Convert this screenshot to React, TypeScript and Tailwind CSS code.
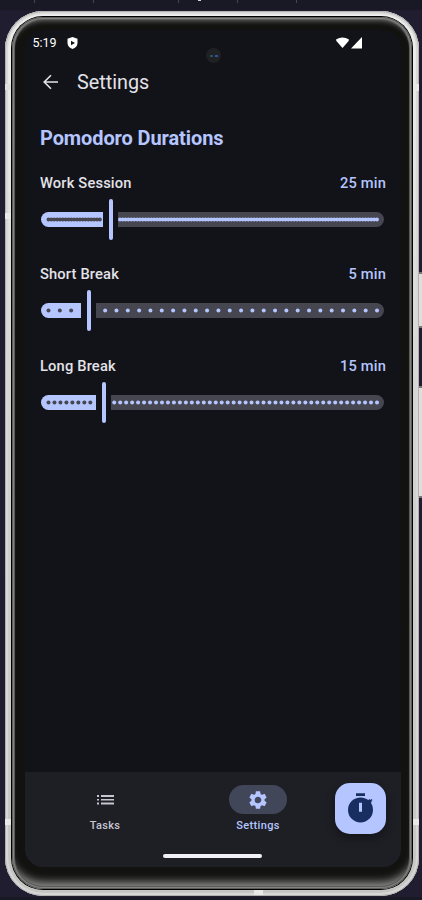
import React from "react";

const TICK_START = 7.5;
const TICK_SPAN = 328.5;

type DurationProps = {
  label: string;
  value: string;
  steps: number;
  active: number;
};

function Ticks({ from, width, steps, color }: { from: number; width: number; steps: number; color: string }) {
  const dots: number[] = [];
  for (let i = 0; i <= steps; i++) {
    const x = TICK_START + (TICK_SPAN * i) / steps - from;
    if (x >= 1.5 && x <= width - 0.5) dots.push(x);
  }
  const dense = steps > 100;
  return (
    <svg className="block h-full w-full" viewBox={`0 0 ${width} 15`} preserveAspectRatio="none">
      {dense && <path d={`M${dots[0]} 7.5H${dots[dots.length - 1]}`} stroke={color} strokeWidth={2.6} />}
      {dots.map((x) => (
        <circle key={x} cx={x} cy={7.5} r={dense ? 1.9 : 2} fill={color} />
      ))}
    </svg>
  );
}

function Duration({ label, value, steps, active }: DurationProps) {
  const inactiveStart = active + 15;
  const rest = 343 - inactiveStart;
  return (
    <section className="h-[91.5px]">
      <div className="flex h-6 items-center justify-between text-[14.7px] leading-6 font-medium tracking-[0.16px]">
        <span className="text-[#e3e2e9]">{label}</span>
        <span className="text-[#b4c5ff]">{value}</span>
      </div>
      <div className="mt-1 ml-px flex h-[41px] w-[343px] items-center">
        <div className="h-[15px] shrink-0 overflow-hidden rounded-l-full rounded-r-[2px] bg-[#b4c5ff]" style={{ width: active }}>
          <Ticks from={0} width={active} steps={steps} color="#45464f" />
        </div>
        <div className="mx-[5.5px] h-[41px] w-1 shrink-0 rounded-full bg-[#b4c5ff]" />
        <div className="h-[15px] shrink-0 overflow-hidden rounded-l-[2px] rounded-r-full bg-[#45464f]" style={{ width: rest }}>
          <Ticks from={inactiveStart} width={rest} steps={steps} color="#b4c5ff" />
        </div>
      </div>
    </section>
  );
}

function StatusBar() {
  return (
    <div className="flex h-[24px] items-center pt-px pl-[7.5px] text-white">
      <span className="w-[34px] text-[12.5px] leading-6">5:19</span>
      <svg className="h-3 w-[11px]" viewBox="0 0 11 12">
        <path d="M5.5 0 10.5 1.8V6c0 3-2 5-5 6-3-1-5-3-5-6V1.8Z" fill="#fff" />
        <path d="M4 3.7 8 6 4 8.3Z" fill="#121318" />
      </svg>
      <svg className="ml-[258.5px] h-3 w-[27px]" viewBox="0 0 27 12">
        <path d="M0 2.4Q6.5-1.6 13 2.4L12.6 4 6.5 11 .4 4Z" fill="#fff" />
        <path d="M26 0V11.5H15Z" fill="#fff" />
      </svg>
    </div>
  );
}

function BottomBar() {
  return (
    <nav className="flex h-[95px] flex-col items-center bg-[#1e1f25]">
      <div className="flex h-[82px] w-full items-start pt-[11px] text-[11px] font-medium tracking-[0.35px]">
        <div className="ml-[51px] flex w-[58px] flex-col items-center pt-[2px] text-[#c6c6d0]">
          <div className="flex h-[29px] items-center justify-center">
            <svg className="h-[10px] w-[17px]" viewBox="0 0 17 10">
              <path d="M0 0h2v2H0ZM4 0h13v2H4ZM0 4h2v1.6H0ZM4 4h13v1.6H4ZM0 7.4h2v2H0ZM4 7.4h13v2H4Z" fill="currentColor" />
            </svg>
          </div>
          <span className="mt-[3.5px] leading-4">Tasks</span>
        </div>
        <div className="ml-[95px] flex w-[58px] flex-col items-center pt-[2px] text-[#b4c5ff]">
          <div className="flex h-[29px] w-[58.5px] shrink-0 items-center justify-center rounded-full bg-[#424659]">
            <svg className="h-[22px] w-[22px]" viewBox="0 0 24 24">
              <path
                fill="currentColor"
                d="M19.14 12.94c.04-.3.06-.61.06-.94 0-.32-.02-.64-.07-.94l2.03-1.58a.49.49 0 0 0 .12-.61l-1.92-3.32a.488.488 0 0 0-.59-.22l-2.39.96c-.5-.38-1.03-.7-1.62-.94l-.36-2.54a.484.484 0 0 0-.48-.41h-3.84c-.24 0-.43.17-.47.41l-.36 2.54c-.59.24-1.13.57-1.62.94l-2.39-.96c-.22-.08-.47 0-.59.22L2.74 8.87c-.12.21-.08.47.12.61l2.03 1.58c-.05.3-.09.63-.09.94s.02.64.07.94l-2.03 1.58a.49.49 0 0 0-.12.61l1.92 3.32c.12.22.37.29.59.22l2.39-.96c.5.38 1.03.7 1.62.94l.36 2.54c.05.24.24.41.48.41h3.84c.24 0 .44-.17.47-.41l.36-2.54c.59-.24 1.13-.56 1.62-.94l2.39.96c.22.08.47 0 .59-.22l1.92-3.32c.12-.22.07-.47-.12-.61l-2.01-1.58ZM12 15.6A3.61 3.61 0 0 1 8.4 12c0-1.98 1.62-3.6 3.6-3.6s3.6 1.62 3.6 3.6-1.62 3.6-3.6 3.6Z"
              />
            </svg>
          </div>
          <span className="mt-[3.5px] leading-4">Settings</span>
        </div>
        <button className="ml-[48px] flex h-[51px] w-[51px] items-center justify-center rounded-[15px] bg-[#b4c5ff] shadow-[0_4px_8px_1px_rgba(0,0,0,0.3)]">
          <svg className="h-[51px] w-[51px]" viewBox="0 0 51 51">
            <circle cx="25.5" cy="26.9" r="12.5" fill="#182e60" />
            <path d="M21 10.2h9v2.7h-9Z" fill="#182e60" />
            <path d="m31.8 18.4 2.8-2.4 1 1 1.1-1 .8 1-1.1 1.1.4.6-2.4 2.6Z" fill="#182e60" />
            <path d="M24 19.7h3v9h-3Z" fill="#b4c5ff" />
          </svg>
        </button>
      </div>
      <div className="mr-px h-[4px] w-[99px] rounded-full bg-[#f2f0f4]" />
    </nav>
  );
}

export default function App() {
  return (
    <div className="relative h-[900px] w-[422px] overflow-hidden bg-[#201d30] font-[Roboto,sans-serif]">
      <div className="flex h-[10px] bg-[#191825]">
        <i className="ml-[34px] h-[3px] w-px bg-[#464453]" />
        <i className="ml-[58px] h-[3px] w-px bg-[#464453]" />
        <i className="ml-[84px] h-[3px] w-px bg-[#464453]" />
        <i className="ml-[19px] h-px w-[3px] bg-[#d5d5dc]" />
        <i className="ml-[36px] h-[3px] w-px bg-[#464453]" />
        <i className="ml-[58px] h-[3px] w-px bg-[#464453]" />
      </div>

      <div className="mt-px ml-[5px] h-[885px] w-[414px] rounded-[38px] bg-linear-to-b from-[#eeeeee] via-[#d2d2d1] to-[#c5c5c4] p-[6px] pt-[5px] shadow-[inset_0_0_0_1px_#b0b0af,inset_0_0_1px_3px_#d8d8d7]">
        <div className="h-full w-full rounded-[32px] bg-black p-px">
          <div className="h-full w-full rounded-[31px] bg-[#121211] pt-[13px] pr-[11px] pb-[22px] pl-[13px] shadow-[inset_0_0_0_1px_#5c5c5b,inset_0_0_0_2px_#838382,inset_0_0_0_3px_#5a5a59,inset_0_6px_5px_-2px_#666665,inset_0_-11px_9px_-4px_#8e8e8d]">
            <main className="flex h-full w-full flex-col overflow-hidden rounded-[18px] bg-[#121318]">
              <StatusBar />
              <header className="flex h-[55px] items-center pt-px pl-[18px] text-[#e3e2e9]">
                <svg className="h-4 w-4" viewBox="0 0 16 16" fill="none" stroke="currentColor" strokeWidth="1.6">
                  <path d="M15 8H1.7M8 1.2 1.2 8 8 14.8" />
                </svg>
                <h1 className="ml-[18px] pt-[2px] text-[19.8px] leading-7 font-normal">Settings</h1>
              </header>
              <div className="flex-1 px-[15px] pt-[15px]">
                <h2 className="mb-[18.8px] h-[28px] text-[20px] leading-7 font-bold tracking-[-0.1px] text-[#b4c5ff]">Pomodoro Durations</h2>
                <Duration label="Work Session" value="25 min" steps={115} active={62} />
                <Duration label="Short Break" value="5 min" steps={29} active={40} />
                <Duration label="Long Break" value="15 min" steps={55} active={55} />
              </div>
              <BottomBar />
            </main>
          </div>
        </div>
      </div>

      <div className="absolute top-[48px] left-[206px] flex h-[15px] w-[15px] items-center justify-center gap-[2px] rounded-full bg-[#202123]">
        <i className="h-[2px] w-[3px] bg-[#285360]" />
        <i className="h-[2px] w-[3px] bg-[#31549a]" />
      </div>
      <div className="absolute top-[272px] left-[419px] h-[56px] w-[3px] border-y-2 border-[#777776] bg-[#dededd]" />
      <div className="absolute top-[386px] left-[419px] h-[112px] w-[3px] border-y-2 border-[#777776] bg-[#dededd]" />
      <div className="absolute top-[84px] left-[413px] h-[7px] w-[6px] bg-[#e9e9e8]" />
      <div className="absolute top-[213px] left-[5px] h-[6px] w-[6px] bg-[#e9e9e8]" />
      <div className="absolute top-[84px] left-[5px] h-[6px] w-[6px] bg-[#e0e0df]" />
      <div className="absolute top-[819px] left-[5px] h-[6px] w-[6px] bg-[#e9e9e8]" />
      <div className="absolute top-[819px] left-[413px] h-[6px] w-[6px] bg-[#e9e9e8]" />
      <div className="absolute top-[890px] left-[254px] h-[5px] w-[9px] bg-[#e9e9e8]" />
      <div className="absolute bottom-0 left-0 h-[3px] w-full bg-[#191825]" />
    </div>
  );
}
